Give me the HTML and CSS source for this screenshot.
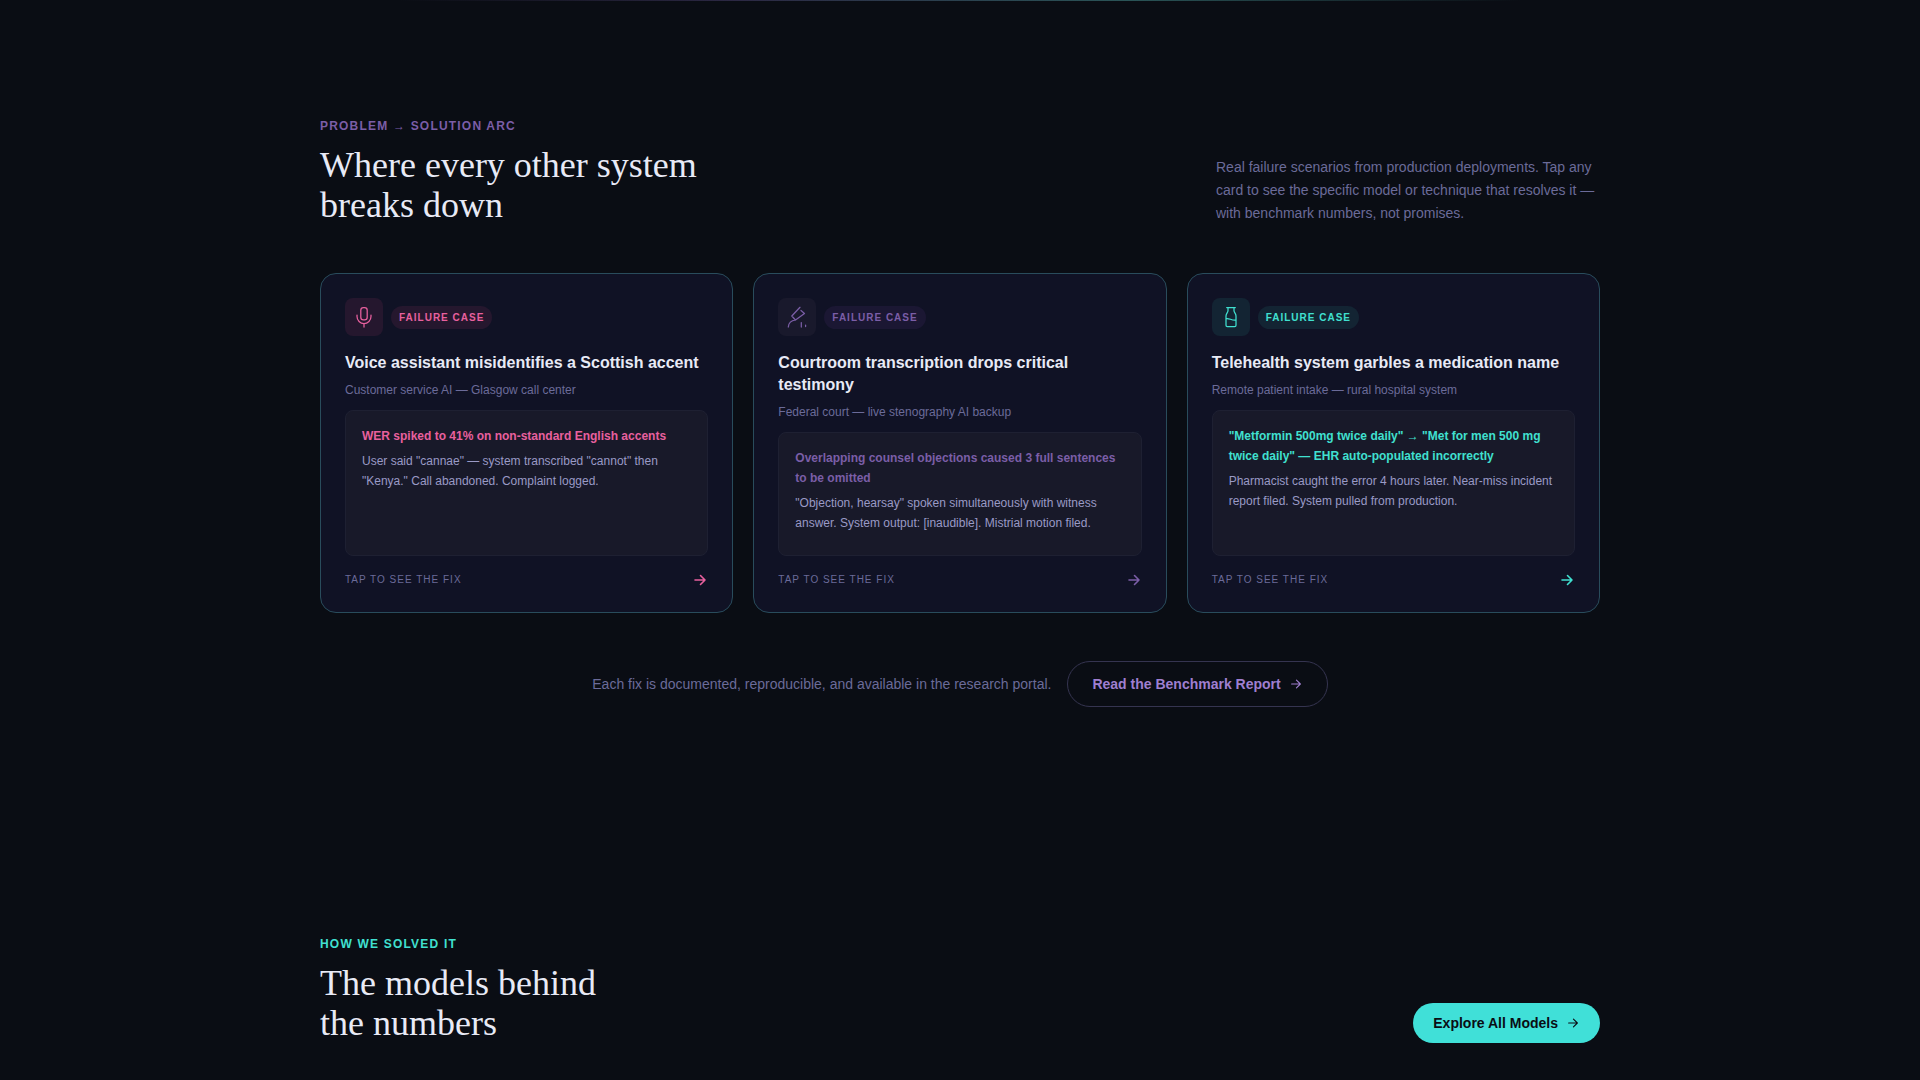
FILE: index.html
```html
<!DOCTYPE html>
<html lang="en">
<head>
<meta charset="utf-8">
<meta name="viewport" content="width=device-width, initial-scale=1">
<title>Where every other system breaks down</title>
<link rel="stylesheet" href="styles.css">
</head>
<body>
<svg class="sprite" aria-hidden="true">
  <symbol id="arrow" viewBox="0 0 16 16"><path d="M3 8h10M8.500 3.500 13 8l-4.500 4.500"/></symbol>
</svg>
<main>
  <section class="section section-lined">
    <div class="container">
      <header class="section-head">
        <div>
          <p class="eyebrow purple">PROBLEM → SOLUTION ARC</p>
          <h2 class="heading">Where every other system<br>breaks down</h2>
        </div>
        <p class="intro">Real failure scenarios from production deployments. Tap any card to see the specific model or technique that resolves it — with benchmark numbers, not promises.</p>
      </header>

      <div class="cards">
        <button type="button" class="card pink">
          <span class="card-top">
            <span class="card-icon">
              <svg viewBox="0 0 20 20" aria-hidden="true"><rect x="6.800" y=".7" width="6.400" height="12.200" rx="2.600"/><path d="M3 8v1.500a7 7 0 0 0 14 0V8M10 16.700V20"/></svg>
            </span>
            <span class="badge">FAILURE CASE</span>
          </span>
          <span class="card-title">Voice assistant misidentifies a Scottish accent</span>
          <span class="card-sub">Customer service AI — Glasgow call center</span>
          <span class="detail">
            <span class="detail-title">WER spiked to 41% on non-standard English accents</span>
            <span class="detail-text">User said "cannae" — system transcribed "cannot" then "Kenya." Call abandoned. Complaint logged.</span>
          </span>
          <span class="card-foot">TAP TO SEE THE FIX <svg class="arrow-16" aria-hidden="true"><use href="#arrow"/></svg></span>
        </button>

        <button type="button" class="card purple">
          <span class="card-top">
            <span class="card-icon">
              <svg viewBox="0 0 20 20" aria-hidden="true"><path d="M13 .3 4.800 9l3.700 4L17.500 6.500 14 3.500M1.300 20c.3-3.700 2.200-6.500 7.200-7M14.300 15.500V20M18.600 18V19.500"/></svg>
            </span>
            <span class="badge">FAILURE CASE</span>
          </span>
          <span class="card-title">Courtroom transcription drops critical testimony</span>
          <span class="card-sub">Federal court — live stenography AI backup</span>
          <span class="detail">
            <span class="detail-title">Overlapping counsel objections caused 3 full sentences to be omitted</span>
            <span class="detail-text">"Objection, hearsay" spoken simultaneously with witness answer. System output: [inaudible]. Mistrial motion filed.</span>
          </span>
          <span class="card-foot">TAP TO SEE THE FIX <svg class="arrow-16" aria-hidden="true"><use href="#arrow"/></svg></span>
        </button>

        <button type="button" class="card teal">
          <span class="card-top">
            <span class="card-icon">
              <svg viewBox="0 0 20 20" aria-hidden="true"><path d="M5.700.6h8.600M7 .6v3.200C7 5.500 5 6.500 5 9v9.200c0 .8.500 1.300 1.300 1.300h7.400c.8 0 1.300-.5 1.300-1.300V9c0-2.500-2-3.500-2-5.200V.6M5 11.700c3-1 6 2.300 10 1.300"/></svg>
            </span>
            <span class="badge">FAILURE CASE</span>
          </span>
          <span class="card-title">Telehealth system garbles a medication name</span>
          <span class="card-sub">Remote patient intake — rural hospital system</span>
          <span class="detail">
            <span class="detail-title">"Metformin 500mg twice daily" → "Met for men 500 mg twice daily" — EHR auto-populated incorrectly</span>
            <span class="detail-text">Pharmacist caught the error 4 hours later. Near-miss incident report filed. System pulled from production.</span>
          </span>
          <span class="card-foot">TAP TO SEE THE FIX <svg class="arrow-16" aria-hidden="true"><use href="#arrow"/></svg></span>
        </button>
      </div>

      <div class="report">
        <p>Each fix is documented, reproducible, and available in the research portal.</p>
        <a class="btn btn-outline" href="#report">Read the Benchmark Report <svg aria-hidden="true"><use href="#arrow"/></svg></a>
      </div>
    </div>
  </section>

  <section class="section section-last">
    <div class="container">
      <header class="section-head">
        <div>
          <p class="eyebrow teal">HOW WE SOLVED IT</p>
          <h2 class="heading">The models behind<br>the numbers</h2>
        </div>
        <a class="btn btn-solid" href="#models">Explore All Models <svg aria-hidden="true"><use href="#arrow"/></svg></a>
      </header>
    </div>
  </section>
</main>
</body>
</html>
```
FILE: styles.css
```css
* { box-sizing: border-box; }

body {
  margin: 0;
  background: #0a0d14;
  color: #e8eaf6;
  font-family: "Liberation Sans", Arial, sans-serif;
}

h2, p { margin: 0; }

svg {
  flex: none;
  fill: none;
  stroke: currentColor;
  stroke-width: 1.25;
  stroke-linecap: round;
  stroke-linejoin: round;
  overflow: visible;
}

.sprite { display: none; }

.pink { --accent: #e8609e; --tint: #25172e; }
.purple { --accent: #7b5ea7; --tint: #1b1733; --icon-tint: #19192c; }
.teal { --accent: #40e0d0; --tint: #132433; }

.section { padding: 116px 24px 111px; }

.section-lined::before {
  content: "";
  display: block;
  height: 1px;
  margin: -116px 20% 115px;
  background: linear-gradient(90deg, transparent, #2c2844 30%, #2a5457 65%, transparent);
}

.section-last { padding-bottom: 35px; }

.container { max-width: 1280px; margin: 0 auto; }

.section-head {
  display: flex;
  justify-content: space-between;
  align-items: flex-end;
  gap: 32px;
}

.eyebrow {
  margin-bottom: 9px;
  color: var(--accent);
  font-size: 12px;
  font-weight: 700;
  line-height: 20px;
  letter-spacing: 0.1em;
}

.heading {
  font-family: "Liberation Serif", "Times New Roman", serif;
  font-size: 36px;
  font-weight: 400;
  line-height: 40px;
}

.intro {
  max-width: 384px;
  color: #6b6b99;
  font-size: 14px;
  line-height: 23px;
}

.cards {
  display: grid;
  grid-template-columns: repeat(auto-fit, minmax(340px, 1fr));
  gap: 20px;
  margin-top: 48px;
}

.card {
  display: flex;
  flex-direction: column;
  min-height: 340px;
  padding: 24px;
  border: 1px solid #294c5c;
  border-radius: 16px;
  background: #101225;
  color: inherit;
  font: inherit;
  text-align: left;
  cursor: pointer;
}

.card-top {
  display: flex;
  align-items: center;
  gap: 8px;
  margin-bottom: 16px;
}

.card-icon {
  display: grid;
  place-items: center;
  width: 38px;
  height: 38px;
  border-radius: 8px;
  background: var(--icon-tint, var(--tint));
  color: var(--accent);
}

.card-icon svg { width: 20px; height: 20px; }

.badge {
  padding: 4px 8px;
  border-radius: 12px;
  background: var(--tint);
  color: var(--accent);
  font-size: 10px;
  font-weight: 700;
  line-height: 15px;
  letter-spacing: 1px;
}

.card-title {
  margin-bottom: 6px;
  font-size: 16px;
  font-weight: 700;
  line-height: 22px;
}

.card-sub {
  margin-bottom: 10px;
  color: #6b6b99;
  font-size: 12px;
  line-height: 20px;
}

.detail {
  display: flex;
  flex: 1;
  flex-direction: column;
  gap: 5px;
  padding: 15px 16px;
  border: 1px solid #1e2032;
  border-radius: 8px;
  background: #181929;
  font-size: 12px;
  line-height: 20px;
}

.detail-title { color: var(--accent); font-weight: 700; }
.detail-text { color: #9a9ac6; }

.card-foot {
  display: flex;
  justify-content: space-between;
  align-items: center;
  margin-top: 16px;
  color: #6b6b99;
  font-size: 10px;
  line-height: 16px;
  letter-spacing: 1px;
}

.arrow-16 {
  width: 16px;
  height: 16px;
  color: var(--accent);
  stroke-width: 1.6;
}

.report {
  display: flex;
  flex-wrap: wrap;
  justify-content: center;
  align-items: center;
  gap: 16px;
  margin-top: 48px;
  color: #6b6b99;
  font-size: 14px;
}

.btn {
  display: inline-flex;
  align-items: center;
  gap: 8px;
  border-radius: 24px;
  font-size: 14px;
  font-weight: 700;
  line-height: 20px;
  text-decoration: none;
  white-space: nowrap;
}

.btn svg { width: 14px; height: 14px; }

.btn-outline {
  padding: 12px 24px;
  border: 1px solid #353450;
  color: #9f7fd0;
}

.btn-solid {
  padding: 10px 20px;
  background: #40e0d8;
  color: #0a0d14;
}
```
